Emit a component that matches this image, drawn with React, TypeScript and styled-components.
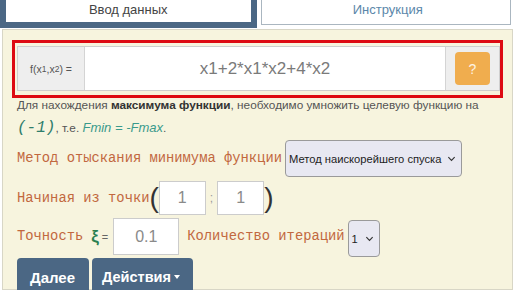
import { FC } from "react"
import styled, { createGlobalStyle } from "styled-components"

const GlobalStyle = createGlobalStyle`
  body {
    margin: 0;
    background: #ffffff;
    font-family: "Liberation Sans", Arial, sans-serif;
  }
`

const Chevron: FC<{ size?: number }> = ({ size = 9 }) => (
  <svg width={size} height={size} viewBox="0 0 10 10">
    <path d="M1.5 3.5 L5 7 L8.5 3.5" fill="none" stroke="#333" strokeWidth="1.3" />
  </svg>
)

const App: FC = () => {
  return (
    <Page>
      <GlobalStyle />
      <Tabs>
        <Tab active>Ввод данных</Tab>
        <Tab>Инструкция</Tab>
      </Tabs>
      <Panel>
        <FormBox>
          <InputGroup>
            <Addon>
              f(x<sub>1</sub>,x<sub>2</sub>) =
            </Addon>
            <FuncInput>x1+2*x1*x2+4*x2</FuncInput>
            <AddonRight>
              <HelpButton>?</HelpButton>
            </AddonRight>
          </InputGroup>
        </FormBox>
        <InfoLine top={0}>
          Для нахождения <b>максимума функции</b>, необходимо умножить целевую функцию на
        </InfoLine>
        <InfoLine top={9}>
          <Code>(-1)</Code>, т.е. <Formula>Fmin = -Fmax</Formula>.
        </InfoLine>
        <Row top={5}>
          <Label>Метод отыскания минимума функции</Label>
          <Select width={177}>
            Метод наискорейшего спуска <Chevron />
          </Select>
        </Row>
        <Row top={4}>
          <Label>Начиная из точки</Label>
          <Paren>(</Paren>
          <NumInput width={47} height={34}>1</NumInput>
          <Sep>;</Sep>
          <NumInput width={47} height={34}>1</NumInput>
          <Paren>)</Paren>
        </Row>
        <Row top={3}>
          <Label>Точность</Label>
          <Xi>ξ</Xi>
          <Eq>=</Eq>
          <NumInput width={66} height={37}>0.1</NumInput>
          <Label pad>Количество итераций</Label>
          <Select width={32} shift={2}>
            1 <Chevron />
          </Select>
        </Row>
        <Buttons>
          <Button>Далее</Button>
          <Button narrow>
            Действия <Caret />
          </Button>
        </Buttons>
      </Panel>
    </Page>
  )
}

const Page = styled.div`
  width: 516px;
  height: 290px;
  overflow: hidden;
  background: #ffffff;
`

const Tabs = styled.div`
  display: flex;
  gap: 4px;
  height: 29px;
  padding-right: 5px;
`

const Tab = styled.div<{ active?: boolean }>`
  flex: 1;
  box-sizing: border-box;
  text-align: center;
  font-size: 13px;
  line-height: 19px;
  background: #ffffff;
  color: ${({ active }) => (active ? "#444444" : "#5b87aa")};
  border: ${({ active }) => (active ? "6px solid #4b6784" : "1px solid #aab6c0")};
  border-top: none;
  height: ${({ active }) => (active ? "28px" : "25px")};
  padding-left: ${({ active }) => (active ? "0" : "4px")};
`

const Panel = styled.div`
  margin: 0 3px 0 2px;
  height: 261px;
  box-sizing: border-box;
  background: #f7f4de;
  border: 1px solid #d8d6c6;
  padding: 10px 9px 0 9px;
`

const FormBox = styled.div`
  border: 3px solid #dd0a12;
  padding: 3px 0 4px 2px;
`

const InputGroup = styled.div`
  display: flex;
  height: 45px;
  border: 1px solid #cfcfcf;
  box-sizing: border-box;
  background: #ffffff;
`

const Addon = styled.div`
  width: 66px;
  display: flex;
  align-items: center;
  justify-content: center;
  background: #eeeeee;
  border-right: 1px solid #d4d4d4;
  color: #555555;
  font-size: 10.5px;

  sub {
    font-size: 8.5px;
    vertical-align: -3px;
  }
`

const FuncInput = styled.div`
  flex: 1;
  display: flex;
  align-items: center;
  justify-content: center;
  color: #7a7a7a;
  font-size: 17px;
`

const AddonRight = styled.div`
  width: 53px;
  display: flex;
  align-items: center;
  justify-content: center;
  background: #eeeeee;
  border-left: 1px solid #d4d4d4;
`

const HelpButton = styled.div`
  width: 35px;
  height: 33px;
  border-radius: 4px;
  background: #f0ad4e;
  color: #fdf3e3;
  font-size: 14px;
  display: flex;
  align-items: center;
  justify-content: center;
`

const InfoLine = styled.div<{ top: number }>`
  padding-left: 5px;
  margin-top: ${({ top }) => top}px;
  font-size: 11.8px;
  line-height: 14px;
  height: 14px;
  color: #555555;
  white-space: nowrap;

  b {
    color: #333333;
  }
`

const Code = styled.span`
  font-family: "Liberation Mono", "Courier New", monospace;
  font-style: italic;
  font-size: 16px;
  color: #2e7d6b;
`

const Formula = styled.span`
  font-style: italic;
  font-size: 13px;
  color: #3a9a8c;
`

const Row = styled.div<{ top: number }>`
  display: flex;
  align-items: center;
  padding-left: 5px;
  margin-top: ${({ top }) => top}px;
`

const Label = styled.span<{ pad?: boolean }>`
  font-family: "Liberation Mono", "Courier New", monospace;
  font-size: 13.8px;
  color: #c2683f;
  margin-left: ${({ pad }) => (pad ? "8px" : "0")};
`

const Select = styled.div<{ width: number; shift?: number }>`
  width: ${({ width }) => width}px;
  height: 37px;
  box-sizing: border-box;
  margin-left: 3px;
  position: relative;
  top: ${({ shift }) => shift ?? 0}px;
  display: flex;
  align-items: center;
  justify-content: space-between;
  padding: 0 5px 0 3px;
  background: #e8e8f2;
  border: 1px solid #9a9a9a;
  border-radius: 4px;
  font-size: 11.2px;
  color: #222222;
  white-space: nowrap;
`

const NumInput = styled.div<{ width: number; height: number }>`
  width: ${({ width }) => width}px;
  height: ${({ height }) => height}px;
  box-sizing: border-box;
  background: #ffffff;
  border: 1px solid #cccccc;
  display: flex;
  align-items: center;
  justify-content: center;
  color: #8a8a8a;
  font-size: 16px;
`

const Paren = styled.span`
  font-size: 28px;
  line-height: 30px;
  color: #333333;
`

const Sep = styled.span`
  font-size: 12px;
  color: #999999;
  margin: 0 4px;
`

const Xi = styled.span`
  font-size: 17px;
  font-weight: bold;
  color: #2a8050;
  margin-left: 8px;
`

const Eq = styled.span`
  font-size: 11px;
  color: #666666;
  margin: 0 5px 0 3px;
`

const Buttons = styled.div`
  display: flex;
  gap: 3px;
  padding-left: 5px;
  margin-top: 3px;
`

const Button = styled.div<{ narrow?: boolean }>`
  height: 38px;
  padding: ${({ narrow }) => (narrow ? "0 13px 0 10px" : "0 14px 0 13px")};
  display: flex;
  align-items: center;
  gap: 3px;
  background: #4b6784;
  border-radius: 4px;
  color: #ffffff;
  font-size: ${({ narrow }) => (narrow ? "14.5px" : "15px")};
  font-weight: bold;
`

const Caret = styled.span`
  width: 0;
  height: 0;
  border-left: 3.5px solid transparent;
  border-right: 3.5px solid transparent;
  border-top: 4px solid #ffffff;
`

export default App
